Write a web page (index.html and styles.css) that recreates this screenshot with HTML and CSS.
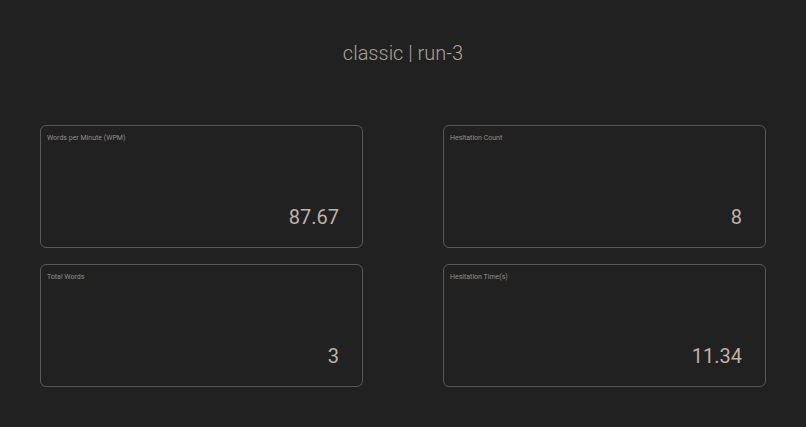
FILE: index.html
```html
<!DOCTYPE html>
<html>
<head>
<meta charset="utf-8">
<link rel="stylesheet" href="styles.css">
</head>
<body>
<main class="page">
  <h1 class="title">classic | run-3</h1>
  <section class="grid">
    <div class="card">
      <div class="label">Words per Minute (WPM)</div>
      <div class="value">87.67</div>
    </div>
    <div class="card">
      <div class="label">Hesitation Count</div>
      <div class="value">8</div>
    </div>
    <div class="card">
      <div class="label">Total Words</div>
      <div class="value">3</div>
    </div>
    <div class="card">
      <div class="label">Hesitation Time(s)</div>
      <div class="value">11.34</div>
    </div>
  </section>
</main>
</body>
</html>
```
FILE: styles.css
```css
html, body {
  margin: 0;
  padding: 0;
  background: #212121;
  height: 100%;
}
body {
  font-family: Roboto, "Liberation Sans", sans-serif;
  color: #b3a9a2;
}
.page {
  padding: 40px 40px 0;
}
.title {
  margin: 0;
  text-align: center;
  font-size: 20px;
  font-weight: 300;
  line-height: 26px;
  color: #a8a19c;
  height: 85px;
}
.grid {
  display: grid;
  grid-template-columns: 1fr 1fr;
  column-gap: 80px;
  row-gap: 16px;
}
.card {
  height: 123px;
  box-sizing: border-box;
  border: 1px solid #5a5857;
  border-radius: 6px;
  padding: 7px 23px 19px 6px;
  display: flex;
  flex-direction: column;
  justify-content: space-between;
}
.label {
  font-size: 7px;
  line-height: 10px;
  color: #948e8a;
}
.value {
  text-align: right;
  font-size: 20px;
  line-height: 22px;
  color: #bdb2aa;
}
```
